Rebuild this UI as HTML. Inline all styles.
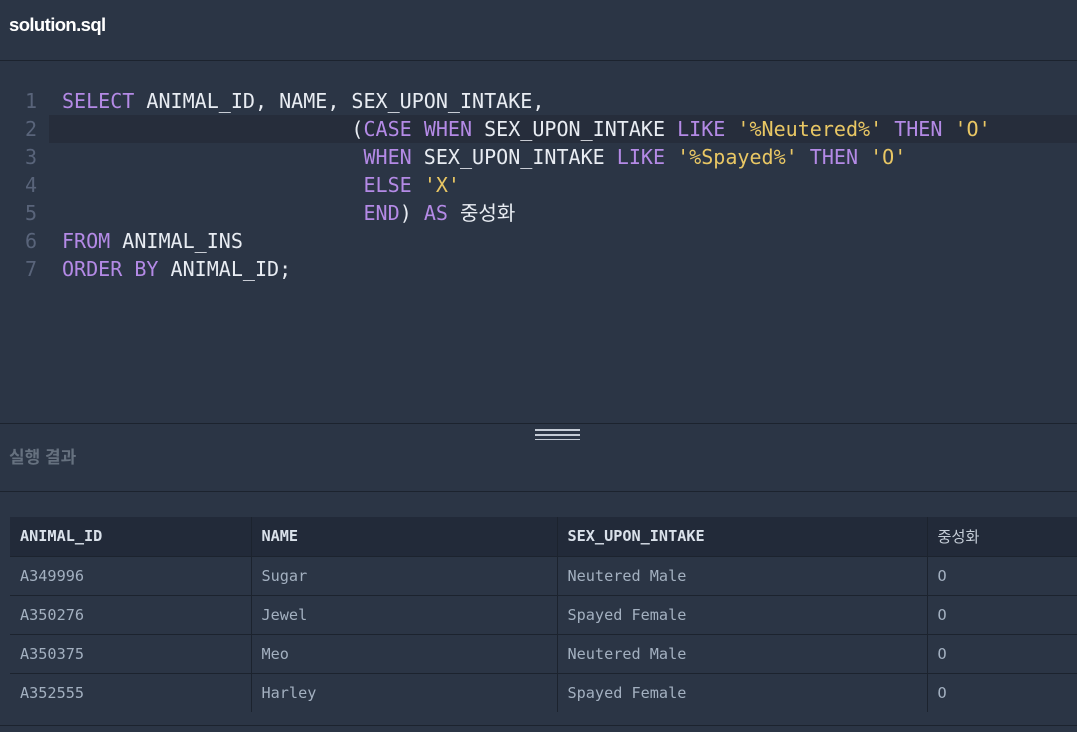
<!DOCTYPE html>
<html><head><meta charset="utf-8"><style>
*{margin:0;padding:0;box-sizing:border-box}
body{width:1077px;height:732px;background:#2b3545;overflow:hidden;position:relative;font-family:"Liberation Sans","Noto Sans CJK KR",sans-serif}
.title{position:absolute;left:9px;top:14px;font-size:18.5px;font-weight:bold;color:#fff;letter-spacing:-0.6px}
.hr{position:absolute;left:0;width:1077px;height:1px;background:#1c232e}
.code{position:absolute;left:0;top:87px;width:1077px;font-family:"DejaVu Sans Mono","Noto Sans CJK KR",monospace;font-size:20.05px}
.ln{height:28px;line-height:28px;white-space:pre;position:relative;color:#e8ecf2}
.ln .n{position:absolute;left:0;width:37px;text-align:right;color:#59647a}
.ln .c{position:absolute;left:62px}
.hl{background:#262d3b;margin-left:49px}
.hl .n{left:-49px}.hl .c{left:13px}
.k{color:#b48ae6}.s{color:#e9c764}
.grip{position:absolute;left:535px;width:45px;height:2px;background:#c5ccd6}
.res{position:absolute;left:9px;top:443px;font-size:17px;font-weight:bold;color:#66717f}
table{position:absolute;left:10px;top:517px;border-collapse:collapse;font-family:"DejaVu Sans Mono","Noto Sans CJK KR",monospace;font-size:15.2px;color:#a3b0c0}
td,th{height:39px;padding:0 0 0 10px;text-align:left;border-right:1px solid #1c232e;border-bottom:1px solid #1c232e}
th{background:#222a39;color:#dae1ea;font-weight:bold}
th.kr{font-weight:normal;color:#c4ccd6;font-family:"Noto Sans CJK KR",sans-serif}
</style></head><body>
<div class="title">solution.sql</div>
<div class="hr" style="top:60px"></div>
<div class="code">
<div class="ln"><span class="n">1</span><span class="c"><span class="k">SELECT</span> ANIMAL_ID, NAME, SEX_UPON_INTAKE,</span></div>
<div class="ln hl"><span class="n">2</span><span class="c">                        (<span class="k">CASE</span> <span class="k">WHEN</span> SEX_UPON_INTAKE <span class="k">LIKE</span> <span class="s">'%Neutered%'</span> <span class="k">THEN</span> <span class="s">'O'</span></span></div>
<div class="ln"><span class="n">3</span><span class="c">                         <span class="k">WHEN</span> SEX_UPON_INTAKE <span class="k">LIKE</span> <span class="s">'%Spayed%'</span> <span class="k">THEN</span> <span class="s">'O'</span></span></div>
<div class="ln"><span class="n">4</span><span class="c">                         <span class="k">ELSE</span> <span class="s">'X'</span></span></div>
<div class="ln"><span class="n">5</span><span class="c">                         <span class="k">END</span>) <span class="k">AS</span> 중성화</span></div>
<div class="ln"><span class="n">6</span><span class="c"><span class="k">FROM</span> ANIMAL_INS</span></div>
<div class="ln"><span class="n">7</span><span class="c"><span class="k">ORDER</span> <span class="k">BY</span> ANIMAL_ID;</span></div>
</div>
<div class="hr" style="top:423px"></div>
<div class="grip" style="top:429px"></div>
<div class="grip" style="top:434px"></div>
<div class="grip" style="top:439px;height:1px"></div>
<div class="res">실행 결과</div>
<div class="hr" style="top:491px"></div>
<table>
<tr><th style="width:241px">ANIMAL_ID</th><th style="width:306px">NAME</th><th style="width:370px">SEX_UPON_INTAKE</th><th class="kr" style="width:150px;border-right:none">중성화</th></tr>
<tr><td>A349996</td><td>Sugar</td><td>Neutered Male</td><td style="border-right:none">O</td></tr>
<tr><td>A350276</td><td>Jewel</td><td>Spayed Female</td><td style="border-right:none">O</td></tr>
<tr><td>A350375</td><td>Meo</td><td>Neutered Male</td><td style="border-right:none">O</td></tr>
<tr><td style="border-bottom:none">A352555</td><td style="border-bottom:none">Harley</td><td style="border-bottom:none">Spayed Female</td><td style="border:none">O</td></tr>
</table>
<div class="hr" style="top:725px"></div>
</body></html>
